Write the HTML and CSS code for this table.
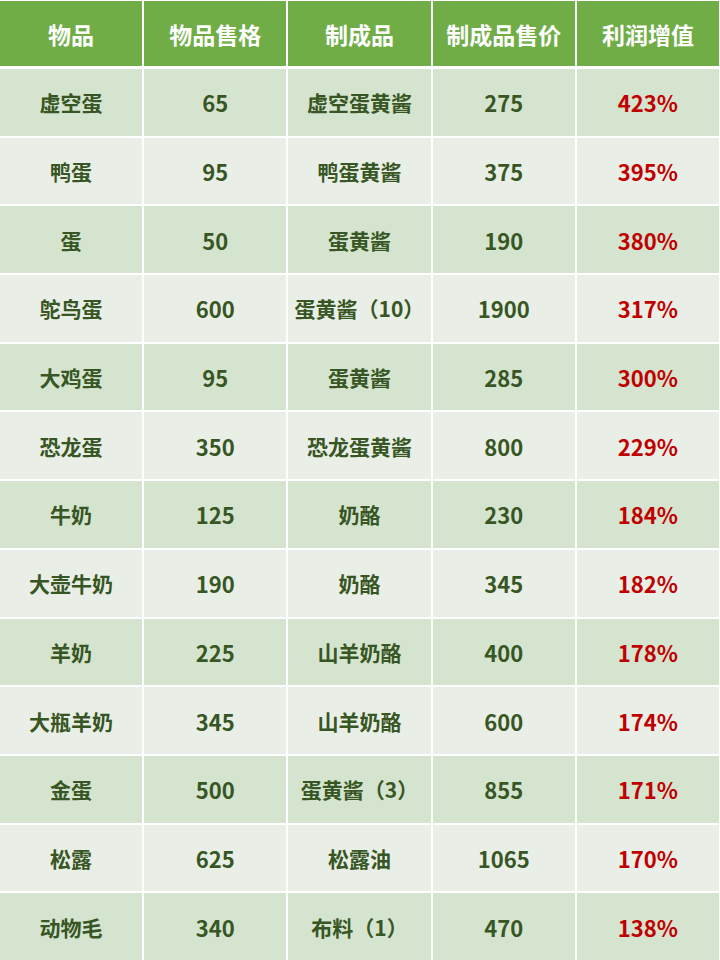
FILE: index.html
```html
<!DOCTYPE html>
<html lang="zh">
<head>
<meta charset="utf-8">
<link rel="stylesheet" href="styles.css">
</head>
<body>
<div class="table">
  <div class="cell head">物品</div><div class="cell head">物品售格</div><div class="cell head">制成品</div><div class="cell head">制成品售价</div><div class="cell head">利润增值</div>

  <div class="cell dark">虚空蛋</div><div class="cell dark num">65</div><div class="cell dark">虚空蛋黄酱</div><div class="cell dark num">275</div><div class="cell dark num red">423%</div>
  <div class="cell light">鸭蛋</div><div class="cell light num">95</div><div class="cell light">鸭蛋黄酱</div><div class="cell light num">375</div><div class="cell light num red">395%</div>
  <div class="cell dark">蛋</div><div class="cell dark num">50</div><div class="cell dark">蛋黄酱</div><div class="cell dark num">190</div><div class="cell dark num red">380%</div>
  <div class="cell light">鸵鸟蛋</div><div class="cell light num">600</div><div class="cell light">蛋黄酱（10）</div><div class="cell light num">1900</div><div class="cell light num red">317%</div>
  <div class="cell dark">大鸡蛋</div><div class="cell dark num">95</div><div class="cell dark">蛋黄酱</div><div class="cell dark num">285</div><div class="cell dark num red">300%</div>
  <div class="cell light">恐龙蛋</div><div class="cell light num">350</div><div class="cell light">恐龙蛋黄酱</div><div class="cell light num">800</div><div class="cell light num red">229%</div>
  <div class="cell dark">牛奶</div><div class="cell dark num">125</div><div class="cell dark">奶酪</div><div class="cell dark num">230</div><div class="cell dark num red">184%</div>
  <div class="cell light">大壶牛奶</div><div class="cell light num">190</div><div class="cell light">奶酪</div><div class="cell light num">345</div><div class="cell light num red">182%</div>
  <div class="cell dark">羊奶</div><div class="cell dark num">225</div><div class="cell dark">山羊奶酪</div><div class="cell dark num">400</div><div class="cell dark num red">178%</div>
  <div class="cell light">大瓶羊奶</div><div class="cell light num">345</div><div class="cell light">山羊奶酪</div><div class="cell light num">600</div><div class="cell light num red">174%</div>
  <div class="cell dark">金蛋</div><div class="cell dark num">500</div><div class="cell dark">蛋黄酱（3）</div><div class="cell dark num">855</div><div class="cell dark num red">171%</div>
  <div class="cell light">松露</div><div class="cell light num">625</div><div class="cell light">松露油</div><div class="cell light num">1065</div><div class="cell light num red">170%</div>
  <div class="cell dark">动物毛</div><div class="cell dark num">340</div><div class="cell dark">布料（1）</div><div class="cell dark num">470</div><div class="cell dark num red">138%</div>
</div>
</body>
</html>
```

FILE: styles.css
```css
html, body {
  margin: 0;
  padding: 0;
  background: #ffffff;
}
.table {
  width: 720px;
  height: 960px;
  box-sizing: border-box;
  padding: 1px 1px 0 0;
  background: #ffffff;
  display: grid;
  grid-template-columns: repeat(5, 1fr);
  grid-template-rows: 66px repeat(13, 1fr);
  column-gap: 2px;
  row-gap: 2px;
  font-family: "Noto Sans CJK SC", "Noto Sans", sans-serif;
  font-weight: 700;
}
.cell {
  display: flex;
  align-items: center;
  justify-content: center;
  font-size: 21px;
  color: #375623;
  white-space: nowrap;
}
.num {
  font-size: 22px;
}
.head {
  background: #70ad47;
  color: #ffffff;
  font-size: 23px;
  margin-bottom: 1px;
}
.dark {
  background: #d5e4cf;
}
.light {
  background: #e9efe7;
}
.red {
  color: #c00000;
}
```
